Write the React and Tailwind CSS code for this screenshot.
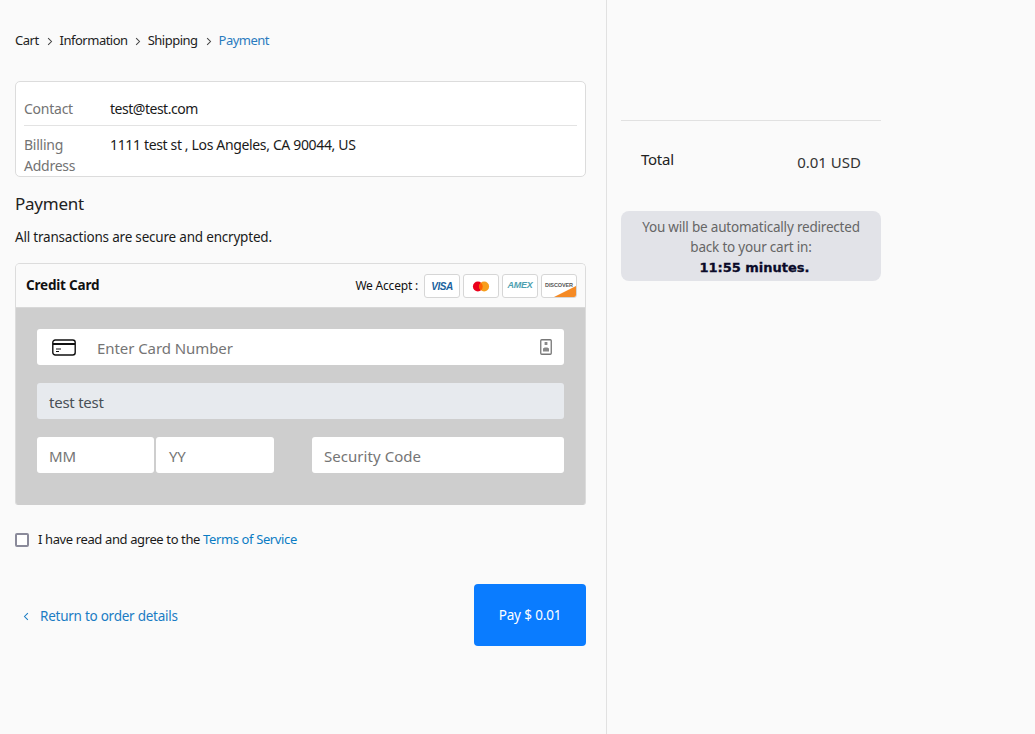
import React from 'react';

const Chevron = ({ className = '' }) => (
  <svg viewBox="0 0 8 12" className={`w-[6px] h-[9px] ${className}`} fill="none" stroke="currentColor" strokeWidth="1.4">
    <path d="M1.5 1.5 6 6l-4.5 4.5" />
  </svg>
);

const CardBadge = ({ children }) => (
  <div className="relative w-[36px] h-[24px] bg-white border border-[#d6d6d6] rounded-[3px] flex items-center justify-center overflow-hidden">
    {children}
  </div>
);

const App = () => {
  return (
    <div className="min-h-[734px] bg-[#fafafa] flex text-[14px] text-[#1a1a1a] font-['Noto_Sans',sans-serif] tracking-[-0.25px]">
      {/* Left column */}
      <div className="w-[607px] h-[734px] shrink-0 border-r border-[#e1e1e1] pl-[15px] pr-[20px]">
        {/* Breadcrumb */}
        <div className="flex items-center h-[20px] mt-[31px] text-[13px] tracking-[-0.5px] text-[#222]">
          <span>Cart</span>
          <Chevron className="ml-[8px] mr-[7px] text-[#444]" />
          <span>Information</span>
          <Chevron className="mx-[7px] text-[#444]" />
          <span>Shipping</span>
          <Chevron className="ml-[8px] mr-[7px] text-[#444]" />
          <span className="text-[#2a7bbf]">Payment</span>
        </div>

        {/* Contact box */}
        <div className="mt-[30px] h-[96px] bg-white border border-[#dcdcdc] rounded-[5px] px-[8px] pt-[11px] overflow-hidden">
          <div className="flex h-[33px] items-center border-b border-[#e3e3e3] pb-[2px]">
            <span className="w-[86px] text-[#737373]">Contact</span>
            <span className="tracking-[-0.48px]">test@test.com</span>
          </div>
          <div className="flex pt-[8px] leading-[21px]">
            <span className="w-[86px] text-[#737373]">Billing<br />Address</span>
            <span className="tracking-[-0.35px]">1111 test st , Los Angeles, CA 90044, US</span>
          </div>
        </div>

        <h2 className="mt-[15px] text-[17px] leading-[24px] text-[#222]">Payment</h2>
        <p className="mt-[11px] text-[13.5px] leading-[20px] tracking-[-0.2px]">All transactions are secure and encrypted.</p>

        {/* Credit card panel */}
        <div className="mt-[16px] h-[242px] border border-b-0 border-[#dcdcdc] rounded-t-[5px] rounded-b-[3px] overflow-hidden flex flex-col">
          <div className="h-[43px] shrink-0 bg-[#fafafa] flex items-center justify-between pl-[10px] pr-[8px]">
            <span className="font-bold text-[13.5px] tracking-[-0.2px] text-[#111]">Credit Card</span>
            <div className="flex items-center gap-[3px] pt-[1px]">
              <span className="text-[12px] text-[#111] mr-[3px] tracking-[-0.2px]">We Accept :</span>
              <CardBadge>
                <span className="text-[10px] font-bold italic text-[#1a629e] tracking-[-0.4px] font-['Liberation_Sans',sans-serif]">VISA</span>
              </CardBadge>
              <CardBadge>
                <svg viewBox="0 0 20 12" className="w-[18px] h-[11px]">
                  <circle cx="6.5" cy="6" r="5.5" fill="#eb001b" />
                  <circle cx="13.5" cy="6" r="5.5" fill="#f79e1b" />
                  <path d="M10 1.8a5.5 5.5 0 0 1 0 8.4 5.5 5.5 0 0 1 0-8.4z" fill="#ff5f00" />
                </svg>
              </CardBadge>
              <CardBadge>
                <span className="text-[9px] font-bold italic text-[#4d9fb0] tracking-[-0.2px] -mt-[1px] font-['Liberation_Sans',sans-serif]">AMEX</span>
              </CardBadge>
              <CardBadge>
                <span className="text-[5.5px] font-bold text-[#555] tracking-[-0.1px] -mt-[1px] font-['Liberation_Sans',sans-serif]">DISCOVER</span>
                <svg viewBox="0 0 34 22" className="absolute inset-0 w-full h-full">
                  <path d="M34 11v11H12z" fill="#f58a24" />
                </svg>
              </CardBadge>
            </div>
          </div>

          <div className="flex-1 bg-[#cecece] border-t border-[#d8d8d8] px-[21px] pt-[21px]">
            <div className="h-[36px] bg-white rounded-[3px] flex items-center pl-[15px] pr-[12px]">
              <svg viewBox="0 0 24 17" className="w-[24px] h-[17px] shrink-0" fill="none" stroke="#111" strokeWidth="1.4">
                <rect x="0.8" y="1" width="22.4" height="15" rx="2.5" />
                <path d="M1 5h22" strokeWidth="2" />
                <path d="M4 10h5M4 12.500h3" strokeWidth="1" />
              </svg>
              <span className="ml-[21px] flex-1 text-[15px] pt-[2px] tracking-[-0.07px] text-[#757575]">Enter Card Number</span>
              <svg viewBox="0 0 12 16" className="w-[12px] h-[16px]" fill="none">
                <rect x="0.75" y="0.75" width="10.5" height="14.5" rx="1" stroke="#777" strokeWidth="1.3" />
                <rect x="4.6" y="3" width="2.8" height="3" fill="#888" />
                <path d="M3 12.5V10c0-1 1-1.5 3-1.5s3 .5 3 1.5v2.500z" fill="#888" />
              </svg>
            </div>
            <div className="mt-[18px] h-[36px] bg-[#e7eaee] rounded-[3px] flex items-center pl-[12px] pt-[2px] text-[15px] text-[#495057]">
              test test
            </div>
            <div className="mt-[18px] flex">
              <div className="w-[117px] h-[36px] bg-white rounded-[3px] flex items-center pl-[12px] pt-[2px] text-[15px] tracking-[0px] text-[#757575]">MM</div>
              <div className="ml-[2px] w-[118px] h-[36px] bg-white rounded-[3px] flex items-center pl-[13px] pt-[2px] text-[15px] text-[#757575]">YY</div>
              <div className="ml-auto w-[252px] h-[36px] bg-white rounded-[3px] flex items-center pl-[12px] pt-[2px] text-[15px] tracking-[0.05px] text-[#757575]">Security Code</div>
            </div>
          </div>
        </div>

        {/* Terms */}
        <div className="mt-[25px] flex items-center h-[20px] text-[13px] tracking-[-0.38px]">
          <span className="w-[14px] h-[14px] bg-white border-2 border-[#8a8a9a] rounded-[2px] shrink-0" />
          <span className="ml-[9px]">I have read and agree to the <span className="text-[#0a7cc4]">Terms of Service</span></span>
        </div>

        {/* Footer actions */}
        <div className="mt-[34px] flex items-center justify-between">
          <div className="flex items-center pl-[8px] pt-[2px] text-[13.5px] text-[#1a7cc4]">
            <Chevron className="rotate-180" />
            <span className="ml-[11px]">Return to order details</span>
          </div>
          <button className="w-[112px] h-[62px] bg-[#0a7cff] rounded-[4px] pt-[1px] text-white text-[13.5px] tracking-[-0.15px]">Pay $ 0.01</button>
        </div>
      </div>

      {/* Right column */}
      <div className="w-[260px] ml-[14px] pt-[120px]">
        <div className="border-t border-[#e1e1e1] pt-[28px] pl-[20px] pr-[20px] flex justify-between">
          <span className="text-[15px] leading-[20px] text-[#222]">Total</span>
          <span className="text-[15px] leading-[20px] mt-[3px] tracking-[0px] text-[#333]">0.01 USD</span>
        </div>
        <div className="mt-[39px] h-[70px] bg-[#e2e3e8] rounded-[8px] text-center text-[13.5px] leading-[20px] tracking-[-0.2px] text-[#666] pt-[6px]">
          You will be automatically redirected<br />
          back to your cart in:<br />
          <span className="inline-block pl-[7px] font-bold text-[#0b0b2a] tracking-[0px] [-webkit-text-stroke:0.3px_#0b0b2a] font-['DejaVu_Sans',sans-serif] text-[13px]">11:55 minutes.</span>
        </div>
      </div>
    </div>
  );
};

export default App;
